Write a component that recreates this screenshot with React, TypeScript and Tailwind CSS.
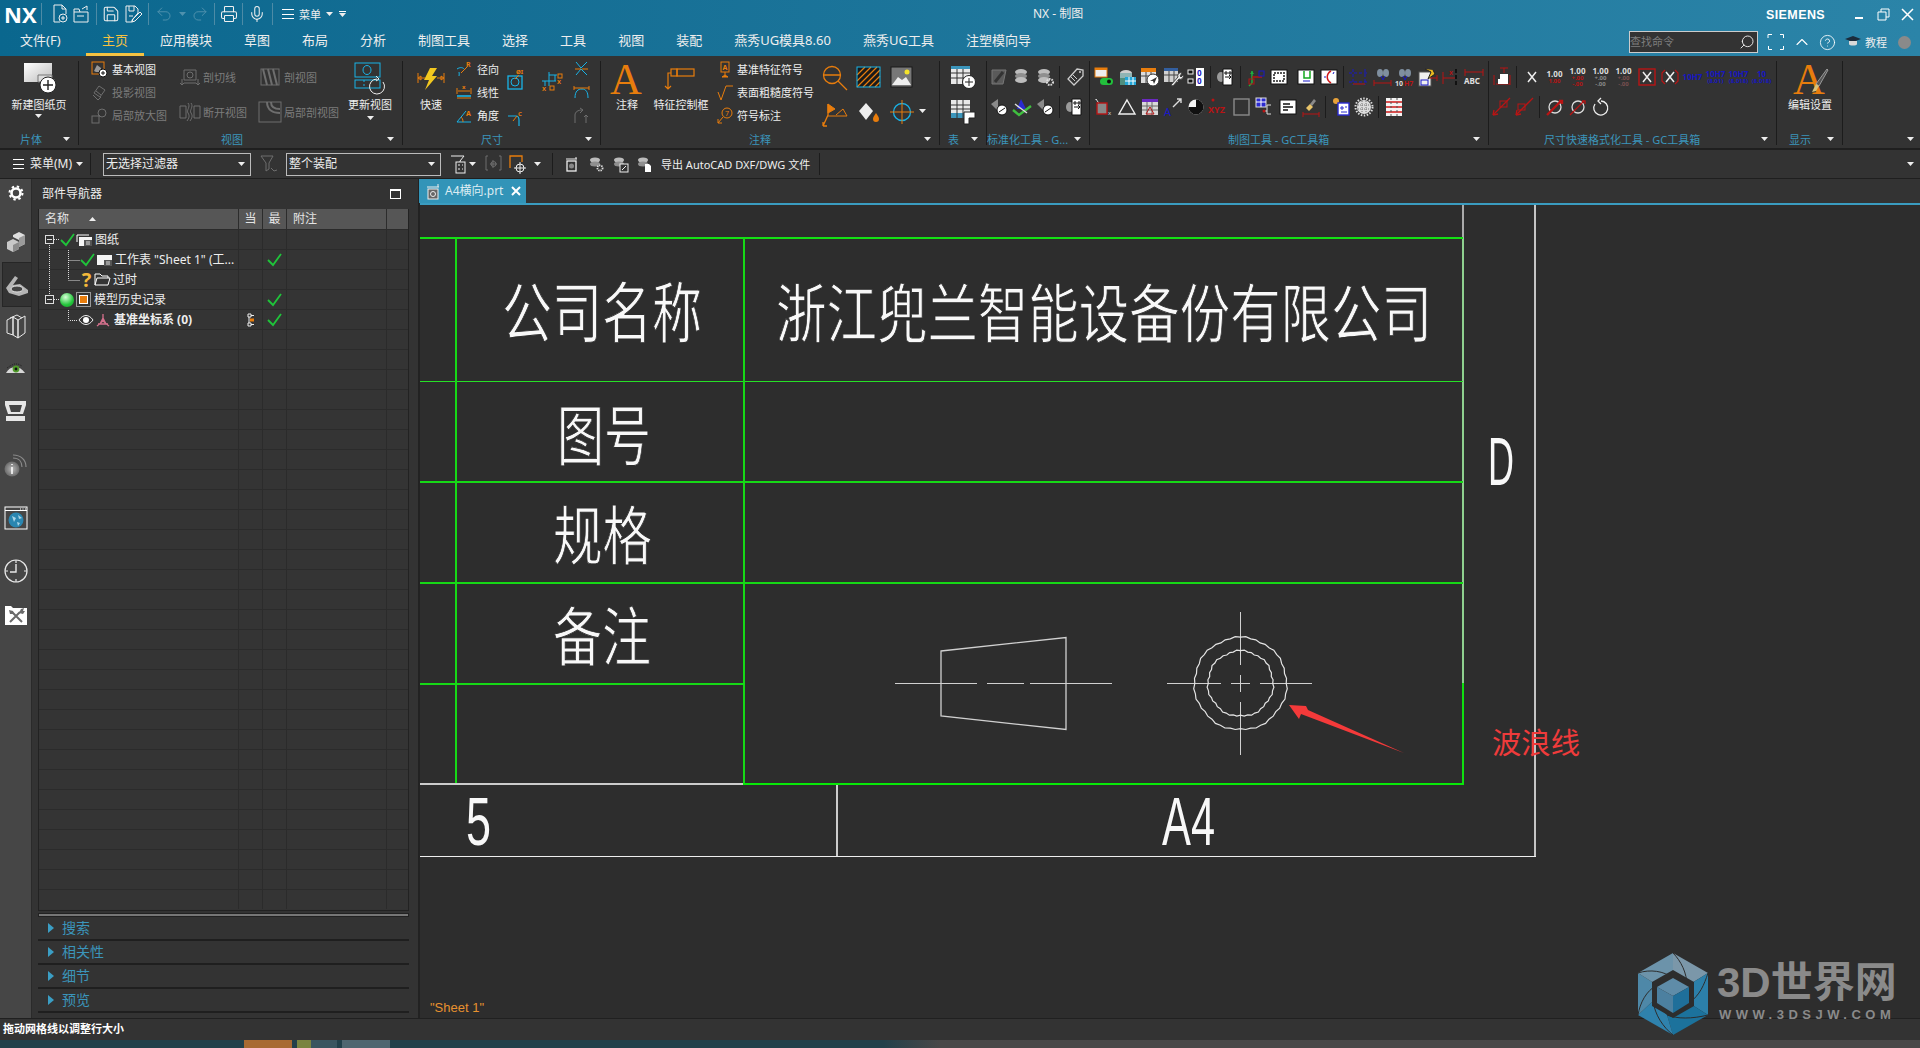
import type { ReactNode } from "react";
import { Save, Printer, Mic, Undo2, Redo2, CircleHelp, ChevronUp, Search } from "lucide-react";

const O = "#e87d0d";
const C = "#19b4e8";
const D = "#6e6e6e";
const W = "#eeeeee";
const R = "#b81414";
const B = "#1818c8";

function Ic({ w = 20, h = 20, children }: { w?: number; h?: number; children: ReactNode }) {
  return (
    <svg width={w} height={h} viewBox={`0 0 ${w} ${h}`} fill="none" className="shrink-0 overflow-visible">
      {children}
    </svg>
  );
}

function Caret({ color = "#eeeeee" }: { color?: string }) {
  return (
    <svg width="7" height="4" viewBox="0 0 7 4" className="shrink-0">
      <path d="M0 0h7L3.5 4z" fill={color} />
    </svg>
  );
}

function Group({ width, labelPad, label, children }: { width: string; labelPad: string; label: string; children: ReactNode }) {
  return (
    <div className={`flex h-[84px] shrink-0 flex-col border-r border-[#1c1c1c] ${width}`}>
      <div className="flex h-[69px]">{children}</div>
      <div className={`flex h-[15px] items-center justify-between pt-[3px] pr-[8px] ${labelPad}`}>
        <span className="text-[11px] leading-[15px] whitespace-nowrap text-[#3b95bb]">{label}</span>
        <Caret />
      </div>
    </div>
  );
}

function BigTool({ width, icon, label }: { width: string; icon: ReactNode; label: string }) {
  return (
    <div className={`flex shrink-0 flex-col items-center pt-px ${width}`}>
      <div className="flex h-[34px] items-center justify-center">{icon}</div>
      <span className="text-[11px] leading-[18px] whitespace-nowrap text-[#eeeeee]">{label}</span>
    </div>
  );
}

function SmallTool({ icon, label, dim }: { icon: ReactNode; label: string; dim?: boolean }) {
  return (
    <div className="flex h-[16px] items-center gap-[4px]">
      {icon}
      <span className={`text-[11px] leading-none whitespace-nowrap ${dim ? "text-[#7c7c7c]" : "text-[#eeeeee]"}`}>{label}</span>
    </div>
  );
}

function WideTool({ icon, label, iconBox }: { icon: ReactNode; label: string; iconBox: string }) {
  return (
    <div className="flex h-[22px] items-center">
      <div className={`flex justify-center ${iconBox}`}>{icon}</div>
      <span className="text-[11px] leading-none whitespace-nowrap text-[#7c7c7c]">{label}</span>
    </div>
  );
}

function Cell({ children }: { children?: ReactNode }) {
  return <div className="flex h-[22px] w-[23px] shrink-0 items-center justify-center">{children}</div>;
}

function Sep() {
  return <div className="mx-[3px] h-[22px] w-px shrink-0 bg-[#1c1c1c]" />;
}

function Tol({ a, b, c, color = "#dddddd", sub = R }: { a: string; b?: string; c?: string; color?: string; sub?: string }) {
  return (
    <div className="flex flex-col items-center font-bold">
      <span className="text-[8px] leading-[8px]" style={{ color }}>{a}</span>
      {b && <span className="text-[6px] leading-[6px]" style={{ color: sub }}>{b}</span>}
      {c && <span className="text-[6px] leading-[6px]" style={{ color: sub }}>{c}</span>}
    </div>
  );
}

/* ---- quick access ---- */
function NewFileIcon() {
  return (
    <Ic w={16} h={20}>
      <path d="M10 1H2v17h6M10 1l4 4v5M10 1v4h4" stroke={W} />
      <circle cx="11" cy="14" r="4" stroke={W} />
      <path d="M11 12v4M9 14h4" stroke={W} />
    </Ic>
  );
}
function OpenFileIcon() {
  return (
    <Ic w={17} h={20}>
      <path d="M1 18V8h14v10zM1 8V5h5l1 3M9 5l5-3v4" stroke={W} />
      <path d="M4 12h7" stroke={W} />
    </Ic>
  );
}
function SaveAsIcon() {
  return (
    <Ic w={17} h={20}>
      <path d="M1 2h9l3 3v4L7 16v2H1z" stroke={W} />
      <path d="M4 2v5h5V2M4 12h4" stroke={W} />
      <path d="M7 18l1-3 7-7 2 2-7 7z" stroke={W} />
    </Ic>
  );
}

/* ---- ribbon icons ---- */
function NewSheetIcon() {
  return (
    <Ic w={34} h={34}>
      <defs>
        <linearGradient id="sheet" x1="0" y1="0" x2="1" y2="1">
          <stop offset="0" stopColor="#ffffff" />
          <stop offset="1" stopColor="#bdbdbd" />
        </linearGradient>
      </defs>
      <rect x="2" y="1" width="28" height="19" fill="url(#sheet)" />
      <path d="M16 13h14v7H16z" fill="#dddddd" stroke="#777777" />
      <circle cx="26" cy="23" r="8" fill="#ffffff" stroke="#222222" />
      <path d="M26 18v10M21 23h10" stroke="#222222" strokeWidth="1.4" />
    </Ic>
  );
}
function BaseViewIcon() {
  return (
    <Ic w={17} h={17}>
      <rect x="1" y="1" width="12" height="12" stroke={O} />
      <path d="M3 10l3-6 4 3v4H5z" fill="#9a9a9a" />
      <circle cx="12" cy="12" r="4" fill="#ffffff" stroke="#111111" />
      <path d="M12 10v4M10 12h4" stroke="#111111" />
    </Ic>
  );
}
function DimProj() {
  return (
    <Ic w={17} h={17}>
      <path d="M3 9l5-7 6 4-5 7zM5 7l5 4M2 11l5 5 3-3" stroke={D} />
    </Ic>
  );
}
function DimDetail() {
  return (
    <Ic w={17} h={17}>
      <rect x="1" y="9" width="7" height="7" stroke={D} />
      <circle cx="11" cy="6" r="4" stroke={D} />
      <path d="M8 9l1-1" stroke={D} />
    </Ic>
  );
}
function DimSection() {
  return (
    <Ic w={22} h={20}>
      <path d="M5 3h12v10H5z" stroke={D} />
      <circle cx="11" cy="8" r="3" stroke={D} />
      <path d="M3 12v6M1 16l2 2 2-2M19 12v6M17 16l2 2 2-2M5 16h12" stroke={D} />
    </Ic>
  );
}
function DimBreak() {
  return (
    <Ic w={22} h={20}>
      <path d="M1 4h6v12H1zM15 4h6v12h-6zM9 1c3 4-2 7 0 10s1 5-1 8M12 1c3 4-2 7 0 10s1 5-1 8" stroke={D} />
    </Ic>
  );
}
function DimCut() {
  return (
    <Ic w={20} h={18}>
      <rect x="1" y="1" width="18" height="16" stroke={D} />
      <path d="M3 1l4 16M8 1l4 16M13 1l4 16" stroke={D} strokeWidth="2" />
    </Ic>
  );
}
function DimLocal() {
  return (
    <Ic w={24} h={22}>
      <rect x="1" y="1" width="22" height="20" stroke={D} />
      <path d="M9 1c0 8 6 11 13 11M13 1c0 5 4 7 9 7" stroke={D} strokeWidth="2" />
    </Ic>
  );
}
function UpdateViewIcon() {
  return (
    <Ic w={32} h={34}>
      <rect x="1" y="1" width="25" height="14" stroke={C} />
      <ellipse cx="13" cy="8" rx="4" ry="4.5" stroke={C} />
      <rect x="1" y="18" width="25" height="8" stroke={C} />
      <path d="M10 18v8" stroke={C} strokeDasharray="2 2" />
      <path d="M29 20a7.5 7.5 0 1 1-6-3" stroke={W} />
      <path d="M22 14l3 3-3 2" stroke={W} />
    </Ic>
  );
}
function QuickIcon() {
  return (
    <Ic w={28} h={26}>
      <path d="M13 2h7l-5 8h5L8 24l4-10H7z" fill="#f2c81f" />
      <path d="M1 7v10M27 7v10M2 12h6M20 12h6M1 12l3-2v4zM27 12l-3-2v4z" stroke={O} />
    </Ic>
  );
}
function RadialIcon() {
  return (
    <Ic w={17} h={17}>
      <path d="M1 8c3-2 6-2 8 1M3 15a9 9 0 0 0 0-4" stroke={C} />
      <path d="M5 12l6-6" stroke={O} />
      <text x="10" y="6" fontSize="7" fontWeight="700" fill={O}>R</text>
    </Ic>
  );
}
function LinearIcon() {
  return (
    <Ic w={17} h={17}>
      <path d="M1 4v6M15 4v6M2 7h12M1 14h14" stroke={O} />
      <path d="M1 12h14" stroke={C} strokeWidth="1.6" />
      <text x="6" y="5" fontSize="6" fontWeight="700" fill={O}>x</text>
    </Ic>
  );
}
function AngleIcon() {
  return (
    <Ic w={17} h={17}>
      <path d="M1 15h14M1 15l9-11" stroke={C} />
      <path d="M7 15c0-3-1-4-2-5" stroke={O} />
      <text x="10" y="9" fontSize="7" fontWeight="700" fill={O}>A</text>
    </Ic>
  );
}
function DiaBoxIcon() {
  return (
    <Ic w={18} h={23}>
      <rect x="1" y="9" width="14" height="13" stroke={C} strokeWidth="1.3" />
      <circle cx="8" cy="15" r="4" stroke={C} />
      <path d="M8 12l4-4" stroke={O} />
      <text x="9" y="7" fontSize="6" fontWeight="700" fill={O}>ØI</text>
    </Ic>
  );
}
function ChamferIcon() {
  return (
    <Ic w={18} h={17}>
      <path d="M1 6h8c2 0 3 2 3 4v6" stroke={C} strokeWidth="1.2" />
      <path d="M6 11l4-5" stroke={O} />
      <text x="11" y="6" fontSize="6" fontWeight="700" fill={O}>C</text>
    </Ic>
  );
}
function OrdinateIcon() {
  return (
    <Ic w={24} h={22}>
      <path d="M1 12h14M8 3v14M8 6h8M4 12v5M14 6v6" stroke={C} />
      <rect x="17" y="5" width="4" height="4" stroke={O} />
      <text x="16" y="15" fontSize="6" fontWeight="700" fill={O}>X</text>
      <text x="1" y="22" fontSize="6" fontWeight="700" fill={O}>X</text>
      <rect x="9" y="17" width="4" height="4" stroke={O} />
    </Ic>
  );
}
function BandIcon() {
  return (
    <Ic w={17} h={16}>
      <path d="M3 1l5 6 6-6M3 14l5-6 6 6" stroke={C} />
      <path d="M2 8h6M9 8h6" stroke={O} />
    </Ic>
  );
}
function ArcIcon() {
  return (
    <Ic w={17} h={16}>
      <path d="M2 14c0-7 3-9 7-9s6 3 6 9" stroke={C} />
      <path d="M1 2v4M16 2v4M1 4h15" stroke={O} />
    </Ic>
  );
}
function DimChainIcon() {
  return (
    <Ic w={17} h={18}>
      <path d="M2 16V8c0-3 3-5 7-5M7 1l3 2-3 3" stroke={D} />
      <path d="M13 8v8M11 10l2-2 2 2" stroke={D} />
    </Ic>
  );
}
function BigA({ brush }: { brush?: boolean }) {
  return (
    <svg width="36" height="33" viewBox="0 0 36 33" className="shrink-0 overflow-visible">
      <text x="1" y="31" fontSize="44" fontFamily="Liberation Serif, serif" fill={O}>A</text>
      {brush && (
        <>
          <path d="M35 6l1 1-9 16-3-2z" fill="#555555" stroke="#999999" />
          <path d="M24 21l3 2-3 5-4 1z" fill="#d8c27a" />
        </>
      )}
    </svg>
  );
}
function FeatFrameIcon() {
  return (
    <Ic w={28} h={24}>
      <rect x="4" y="2" width="6" height="7" stroke={O} strokeWidth="1.2" />
      <rect x="10" y="2" width="17" height="7" stroke={O} strokeWidth="1.2" />
      <path d="M4 6H1v16M-2 19l3 3 3-3" stroke={O} strokeWidth="1.2" />
    </Ic>
  );
}
function DatumIcon() {
  return (
    <Ic w={16} h={17}>
      <rect x="4" y="1" width="8" height="10" stroke={O} />
      <text x="5.5" y="9" fontSize="7" fontWeight="700" fill={O}>A</text>
      <path d="M8 11v3M5 16h6l-3-2z" fill={O} stroke={O} />
    </Ic>
  );
}
function RoughIcon() {
  return (
    <Ic w={16} h={17}>
      <path d="M1 8l3 8 5-14h7" stroke={O} />
    </Ic>
  );
}
function NoteIcon() {
  return (
    <Ic w={16} h={17}>
      <circle cx="10" cy="6" r="5" stroke={O} />
      <text x="8" y="9" fontSize="7" fill={O}>7</text>
      <path d="M6 10l-5 6M1 12v4h4" stroke={O} />
    </Ic>
  );
}
function CenterLensIcon() {
  return (
    <Ic w={26} h={26}>
      <circle cx="10" cy="10" r="8.5" stroke={O} strokeWidth="1.3" />
      <path d="M2 10h16M16 16l9 9" stroke={O} strokeWidth="1.3" />
    </Ic>
  );
}
function FlagIcon() {
  return (
    <Ic w={26} h={26}>
      <path d="M6 2v11l-5 11M1 24h4M1 24v-4" stroke={O} strokeWidth="1.3" />
      <path d="M6 2l7 5-7 4zM14 13l7-6 4 7H6" stroke={O} />
      <path d="M6 2l7 5-7 4z" fill={O} />
    </Ic>
  );
}
function HatchIcon() {
  return (
    <Ic w={25} h={22}>
      <rect x="1" y="1" width="23" height="20" fill="#1a1a1a" />
      <path d="M1 9l8-8M1 15L15 1M1 21L21 1M7 21L24 4M13 21L24 10M19 21l5-5" stroke={O} strokeWidth="1.2" />
      <rect x="1" y="1" width="23" height="20" stroke={C} />
    </Ic>
  );
}
function ImageIcon() {
  return (
    <Ic w={23} h={22}>
      <rect x="1" y="1" width="21" height="20" fill="#777777" stroke="#1a1a1a" />
      <circle cx="17" cy="6" r="2.5" fill="#f4e32a" />
      <path d="M2 19l6-8 4 3 4-3 5 8z" fill="#eeeeee" />
    </Ic>
  );
}
function FillIcon() {
  return (
    <Ic w={25} h={24}>
      <path d="M10 3l7 8-7 9-7-9z" fill="#eeeeee" />
      <path d="M20 13c2 3 3 4 3 6a3 3 0 0 1-6 0c0-2 1-3 3-6z" fill={O} />
    </Ic>
  );
}
function TargetIcon() {
  return (
    <Ic w={24} h={24}>
      <circle cx="12" cy="12" r="8.5" stroke={C} strokeWidth="1.3" />
      <path d="M0 12h24M12 0v24" stroke={O} />
    </Ic>
  );
}
function TableAddIcon() {
  return (
    <Ic w={26} h={24}>
      <rect x="1" y="1" width="19" height="18" fill="#e8e8e8" />
      <rect x="1" y="1" width="19" height="3" fill="#3b95bb" />
      <path d="M1 8h19M1 13h19M7 4v15M13 4v15" stroke="#333333" />
      <circle cx="19" cy="17" r="6.5" fill="#ffffff" stroke="#222222" />
      <path d="M19 13v8M15 17h8" stroke="#222222" />
    </Ic>
  );
}
function TableMergeIcon() {
  return (
    <Ic w={26} h={26}>
      <rect x="1" y="1" width="19" height="18" fill="#e8e8e8" />
      <rect x="1" y="14" width="19" height="5" fill="#3b95bb" />
      <path d="M1 6h19M1 10h19M7 1v18M13 1v18" stroke="#333333" />
      <path d="M14 13h11v6h-6v6h-5z" fill="#ffffff" stroke="#222222" />
    </Ic>
  );
}

function Gear({ x, y, r, color = "#bbbbbb" }: { x: number; y: number; r: number; color?: string }) {
  return <circle cx={x} cy={y} r={r} fill="none" stroke={color} strokeWidth={r * 0.7} strokeDasharray={`${r * 0.5} ${r * 0.35}`} />;
}
function Stack({ badge }: { badge?: ReactNode }) {
  return (
    <Ic w={20} h={20}>
      <ellipse cx="9" cy="5" rx="6" ry="3" fill="#bdbdbd" />
      <ellipse cx="9" cy="9" rx="6" ry="3" fill="#8f8f8f" />
      <ellipse cx="9" cy="13" rx="6" ry="3" fill="#bdbdbd" />
      {badge}
    </Ic>
  );
}
function TagIcon() {
  return (
    <Ic w={20} h={20}>
      <path d="M12 2l6 1 0 6-9 9-6-6z" stroke="#cccccc" strokeWidth="1.3" />
      <path d="M8 8l4 4M6 10l4 4" stroke="#cccccc" />
      <circle cx="15" cy="5" r="1" fill="#cccccc" />
    </Ic>
  );
}
function DocArrow() {
  return (
    <Ic w={20} h={20}>
      <ellipse cx="5" cy="10" rx="4" ry="5" fill="#9a9a9a" />
      <path d="M7 2h9v16H7z" fill="#ffffff" stroke="#111111" />
      <path d="M9 5h2v2H9zM13 5h2v2h-2zM9 10h6l-2-2M15 10l-2 2" stroke="#111111" />
    </Ic>
  );
}
function RingStack() {
  return (
    <Ic w={20} h={20}>
      <path d="M2 7l7-5v12z" fill="#8a8a8a" />
      <circle cx="13" cy="13" r="5" fill="#ffffff" stroke="#111111" />
      <path d="M10 15l6-4" stroke="#111111" />
    </Ic>
  );
}
function CheckBlue() {
  return (
    <Ic w={20} h={20}>
      <path d="M9 2l5 10H5z" fill="#2a2ad0" />
      <path d="M1 13l6 5 12-9" stroke="#3fbf3f" strokeWidth="2.4" />
      <path d="M3 7l12 9" stroke="#dddddd" strokeWidth="1.4" />
    </Ic>
  );
}
function SheetGreen() {
  return (
    <Ic w={20} h={20}>
      <rect x="1" y="1" width="12" height="9" fill="#eeeeee" stroke={O} />
      <rect x="1" y="1" width="12" height="2" fill={O} />
      <rect x="6" y="11" width="13" height="7" rx="3.5" fill="#22c03c" />
      <circle cx="15" cy="14.5" r="2" fill="#111111" />
    </Ic>
  );
}
function DbGrid() {
  return (
    <Ic w={20} h={20}>
      <ellipse cx="9" cy="6" rx="6" ry="3" fill="#cfcfcf" />
      <rect x="3" y="6" width="12" height="5" fill="#8fb4b4" />
      <rect x="8" y="10" width="11" height="8" fill="#22a6d8" />
      <path d="M8 14h11M12 10v8M16 10v8" stroke="#ffffff" />
      <rect x="3" y="11" width="5" height="7" fill="#4f8f7f" />
    </Ic>
  );
}
function TableNav() {
  return (
    <Ic w={20} h={20}>
      <rect x="1" y="1" width="15" height="15" fill="#dddddd" />
      <rect x="1" y="1" width="15" height="4" fill={O} />
      <path d="M1 9h15M6 5v11M11 5v11" stroke="#444444" />
      <circle cx="13" cy="13" r="6" fill="#ffffff" stroke="#333333" />
      <path d="M10 14l7-4-3 7-1-3z" fill="#333333" />
    </Ic>
  );
}
function TableWrench() {
  return (
    <Ic w={20} h={20}>
      <rect x="1" y="1" width="14" height="14" fill="#d0d0d0" />
      <rect x="1" y="1" width="14" height="3" fill="#335f9f" />
      <path d="M1 8h14M6 4v11M11 4v11" stroke="#444444" />
      <path d="M8 18l7-8a3 3 0 0 1 4-4l-2 3 1 1 2-2a3 3 0 0 1-4 4l-6 7z" fill="#eeeeee" stroke="#444444" />
    </Ic>
  );
}
function ZeroZero() {
  return (
    <Ic w={20} h={20}>
      <rect x="10" y="1" width="8" height="18" fill="#ffffff" />
      <text x="11" y="9" fontSize="8" fontWeight="700" fill={B}>0</text>
      <text x="11" y="17" fontSize="8" fontWeight="700" fill={B}>0</text>
      <rect x="2" y="3" width="5" height="4" fill="#111111" stroke="#eeeeee" />
      <rect x="2" y="12" width="5" height="4" fill="#111111" stroke="#eeeeee" />
    </Ic>
  );
}
function Axes() {
  return (
    <Ic w={20} h={20}>
      <path d="M6 4v12M6 16l-3 3" stroke="#1faf3f" strokeWidth="1.5" />
      <path d="M6 10h10" stroke={R} strokeWidth="1.5" />
      <rect x="3" y="12" width="5" height="5" stroke={R} />
      <rect x="13" y="4" width="5" height="5" stroke={B} />
      <path d="M6 4l2 3H4z" fill="#1faf3f" />
    </Ic>
  );
}
function BoxGlyph({ children }: { children: ReactNode }) {
  return (
    <Ic w={18} h={18}>
      <rect x="1" y="2" width="16" height="14" fill="#ffffff" stroke="#111111" />
      {children}
    </Ic>
  );
}
function Binos() {
  return (
    <>
      <ellipse cx="8" cy="6" rx="3" ry="4" fill="#7f8f9f" />
      <ellipse cx="14" cy="6" rx="3" ry="4" fill="#7f8f9f" />
      <path d="M9 9l2 4 2-4" stroke={B} />
    </>
  );
}
function XMark({ color = "#eeeeee" }: { color?: string }) {
  return <path d="M5 5l8 10M13 5L5 15" stroke={color} strokeWidth="1.5" />;
}
function RedDia({ slash }: { slash?: boolean }) {
  return (
    <Ic w={20} h={20}>
      <path d="M1 18L18 1" stroke={R} strokeWidth="1.3" />
      <path d="M1 18l1-5M1 18l5-1" stroke={R} strokeWidth="1.3" />
      <rect x={slash ? 3 : 8} y={slash ? 7 : 4} width="7" height="6" stroke={R} />
    </Ic>
  );
}
function DiaCircle({ heavy }: { heavy?: boolean }) {
  return (
    <Ic w={20} h={20}>
      <circle cx="10" cy="10" r="6" stroke="#dddddd" strokeWidth="1.3" />
      <path d="M2 18L16 4M14 4h3v3" stroke={R} strokeWidth={heavy ? 2.4 : 1.3} />
    </Ic>
  );
}

/* ---- left rail ---- */
function RailGear() {
  return (
    <Ic w={16} h={16}>
      <circle cx="8" cy="8" r="4.500" stroke="#ffffff" strokeWidth="2.600" />
      <circle cx="8" cy="8" r="6.500" stroke="#ffffff" strokeWidth="2" strokeDasharray="2.400 2.700" />
    </Ic>
  );
}
function RailCubes() {
  return (
    <Ic w={20} h={22}>
      <path d="M1 11l6-3 6 3v7l-6 3-6-3z" fill="#c8c8c8" />
      <path d="M7 4l6-3 6 3v9l-6 3V9l-6-3z" fill="#dedede" />
      <path d="M13 7l6-3v9l-6 3z" fill="#9a9a9a" />
      <path d="M7 14v7l6-3v-7z" fill="#8a8a8a" />
    </Ic>
  );
}
function RailDraft() {
  return (
    <Ic w={24} h={22}>
      <path d="M1 14L10 2l3 2-5 7 7-1 8 6v3l-9 3-10-3z" fill="#b5b5b5" />
      <ellipse cx="12" cy="15" rx="6" ry="3" fill="#444444" stroke="#e0e0e0" />
    </Ic>
  );
}
function RailBooks() {
  return (
    <Ic w={20} h={24}>
      <path d="M1 6l6-3v18l-6-2zM7 3l5 3v18l-5-3zM12 6l7-4v17l-7 5z" stroke="#e8e8e8" />
      <path d="M4 4l7-3 5 3" stroke="#e8e8e8" />
    </Ic>
  );
}
function RailEye() {
  return (
    <Ic w={21} h={13}>
      <path d="M1 11C5 3 15 3 20 11z" fill="#d8d8d8" />
      <path d="M2 6l3-2 4-2 4 0 4 2" stroke="#222222" strokeDasharray="1 1" />
      <circle cx="11" cy="7" r="3.4" fill="#4f9a2a" />
      <circle cx="11" cy="7" r="1.4" fill="#111111" />
    </Ic>
  );
}
function RailMonitor() {
  return (
    <Ic w={21} h={21}>
      <path d="M0 0h21v4l-3 9H3L0 4z" fill="#e6e6e6" />
      <path d="M4 4h13l-2 7H6z" fill="#444444" />
      <rect x="1" y="15" width="19" height="5" fill="#e6e6e6" />
    </Ic>
  );
}
function RailInfo() {
  return (
    <Ic w={23} h={23}>
      <defs>
        <radialGradient id="info">
          <stop offset="0" stopColor="#b8b8b8" />
          <stop offset="1" stopColor="#6a6a6a" />
        </radialGradient>
      </defs>
      <circle cx="8" cy="15" r="7.5" fill="url(#info)" />
      <path d="M8 13v7M8 10v1" stroke="#ffffff" strokeWidth="1.5" />
      <path d="M9 4c6 0 9 4 9 9M9 1c8 0 13 5 13 12" stroke="#8a8a8a" strokeWidth="1.2" />
    </Ic>
  );
}
function RailWeb() {
  return (
    <Ic w={24} h={24}>
      <rect x="1" y="1" width="22" height="22" stroke="#ffffff" />
      <path d="M1 4.5h22" stroke="#ffffff" />
      <path d="M16 3h1M18.500 3h1M21 3h1" stroke="#ffffff" />
      <circle cx="12" cy="14" r="7.500" fill="#2a86b0" />
      <path d="M8 10l4 2-2 4zM14 9l4 3-3 1zM13 16l3 1-2 3z" fill="#a8d4e6" />
    </Ic>
  );
}
function RailClock() {
  return (
    <Ic w={24} h={24}>
      <circle cx="12" cy="12" r="11" stroke="#e8e8e8" strokeWidth="1.2" />
      <path d="M12 1v3M12 20v3M1 12h3M20 12h3" stroke="#e8e8e8" strokeWidth="1.2" />
      <path d="M12 5v8H6" stroke="#e8e8e8" strokeWidth="1.4" />
    </Ic>
  );
}
function RailTools() {
  return (
    <Ic w={22} h={21}>
      <path d="M0 2h6l2 2h14v17H0z" fill="#ffffff" />
      <path d="M5 18L15 8M17 18L7 8" stroke="#6a6a6a" strokeWidth="2" />
      <path d="M14 9l2-4 3-1-1 3 2 0-2 3z M4 6l4 1 1 3-4 0z" fill="#6a6a6a" />
    </Ic>
  );
}

/* ---- tree ---- */
function GreenCheck() {
  return (
    <Ic w={15} h={14}>
      <path d="M1 7l5 5 8-11" stroke="#1fc43a" strokeWidth="1.8" />
    </Ic>
  );
}
function Expand() {
  return (
    <div className="flex h-[9px] w-[9px] shrink-0 items-center justify-center border border-[#dddddd] bg-[#333333]">
      <div className="h-px w-[5px] bg-[#dddddd]" />
    </div>
  );
}
function SheetTree({ stacked }: { stacked?: boolean }) {
  return (
    <Ic w={16} h={12}>
      {stacked && <path d="M1 8V1h12" stroke="#ffffff" />}
      <rect x={stacked ? 3 : 1} y={stacked ? 3 : 1} width={stacked ? 13 : 15} height={stacked ? 9 : 10} fill="#f4f4f4" />
      <rect x="8" y="6" width="8" height="6" fill="#555555" />
      <path d="M10 8h4M10 10h4" stroke="#dddddd" />
    </Ic>
  );
}

const treeRows: { pad: string; body: ReactNode; cur?: boolean; latest?: boolean }[] = [
  {
    pad: "pl-[6px]",
    body: (
      <>
        <Expand />
        <div className="ml-[6px]"><GreenCheck /></div>
        <div className="ml-[1px]"><SheetTree stacked /></div>
        <span className="ml-[3px]">图纸</span>
      </>
    ),
  },
  {
    pad: "pl-[41px]",
    latest: true,
    body: (
      <>
        <GreenCheck />
        <div className="ml-[1px]"><SheetTree /></div>
        <span className="ml-[3px] whitespace-nowrap">工作表 "Sheet 1" (工...</span>
      </>
    ),
  },
  {
    pad: "pl-[41px]",
    body: (
      <>
        <span className="w-[13px] text-center text-[20px] leading-none font-bold text-[#f2b93b]">?</span>
        <div className="ml-[1px]">
          <Ic w={16} h={13}>
            <path d="M1 12V1h5l2 2h6v2M1 12l2-7h13l-2 7z" stroke="#ffffff" />
          </Ic>
        </div>
        <span className="ml-[3px]">过时</span>
      </>
    ),
  },
  {
    pad: "pl-[6px]",
    latest: true,
    body: (
      <>
        <Expand />
        <div className="ml-[6px] h-[14px] w-[14px] rounded-full bg-[radial-gradient(circle_at_40%_30%,#d8ffd8,#22c43a_60%,#169a2a)]" />
        <div className="ml-[2px] flex h-[15px] w-[15px] items-center justify-center border border-[#999999]">
          <div className="h-[9px] w-[9px] border border-[#ffffff] bg-[#e87d0d]" />
        </div>
        <span className="ml-[3px]">模型历史记录</span>
      </>
    ),
  },
  {
    pad: "pl-[39px]",
    cur: true,
    latest: true,
    body: (
      <>
        <Ic w={16} h={12}>
          <path d="M1 6c4-6 10-6 14 0-4 6-10 6-14 0z" stroke="#eeeeee" />
          <circle cx="8" cy="6" r="3" fill="#ffffff" />
        </Ic>
        <div className="ml-[1px]">
          <Ic w={16} h={15}>
            <path d="M8 2v7M8 9l-6 5M8 9l6 5M3 12h10M8 6l-3 6M8 6l3 6" stroke="#d4708c" strokeWidth="1.3" />
          </Ic>
        </div>
        <span className="ml-[3px] font-bold whitespace-nowrap">基准坐标系 (0)</span>
      </>
    ),
  },
];

function CurMark() {
  return (
    <Ic w={8} h={14}>
      <path d="M1 1h3v3H1zM4 2.500h3M1 10h3v3H1zM4 11.500h3M2 4v6" stroke="#eeeeee" />
      <rect x="3" y="5.500" width="4" height="3" fill={O} />
    </Ic>
  );
}

function TreeTable() {
  const rows = Array.from({ length: 34 }, (_, i) => treeRows[i]);
  return (
    <div className="relative mr-[9px] ml-[6px] h-[702px] overflow-hidden border-x border-b border-[#222222]">
      <div className="grid h-[20px] grid-cols-[200px_24px_24px_100px_20px] bg-[#565656] text-[12px] text-[#e4e4e4]">
        <div className="flex items-center border-r border-[#2c2c2c] pl-[6px]">
          <span>名称</span>
          <div className="ml-[20px] rotate-180">
            <Caret />
          </div>
        </div>
        <div className="flex items-center justify-center border-r border-[#2c2c2c]">当</div>
        <div className="flex items-center justify-center border-r border-[#2c2c2c]">最</div>
        <div className="flex items-center border-r border-[#2c2c2c] pl-[6px]">附注</div>
        <div />
      </div>
      {rows.map((row, i) => (
        <div key={i} className="grid h-[20px] grid-cols-[200px_24px_24px_100px_20px] border-t border-[#2b2b2b] bg-[#343434] text-[12px] text-[#eeeeee]">
          <div className={`flex items-center overflow-hidden border-r border-[#2b2b2b] ${row ? row.pad : ""}`}>{row?.body}</div>
          <div className="flex items-center justify-center border-r border-[#2b2b2b]">{row?.cur && <CurMark />}</div>
          <div className="flex items-center justify-center border-r border-[#2b2b2b]">{row?.latest && <GreenCheck />}</div>
          <div className="border-r border-[#2b2b2b]" />
          <div />
        </div>
      ))}
      {/* dotted tree connectors */}
      <svg width="60" height="110" className="pointer-events-none absolute top-[20px] left-0" fill="none">
        <path d="M10.500 16V66M15 10.500h6M29.500 21V51M29.500 31.500H41M29.500 51.500H41M15 70.500h6M29.500 81V91.500H39" stroke="#dddddd" strokeDasharray="1 1" />
      </svg>
    </div>
  );
}

function Section({ label }: { label: string }) {
  return (
    <div className="mr-[9px] ml-[6px] flex h-[24px] items-center border-b-2 border-[#1f1f1f] pl-[10px]">
      <svg width="6" height="10" viewBox="0 0 6 10" className="shrink-0">
        <path d="M0 0l6 5-6 5z" fill="#3b9ec4" />
      </svg>
      <span className="ml-[8px] text-[14px] leading-none text-[#3b95bb]">{label}</span>
    </div>
  );
}

/* ---- drawing ---- */
function wavy(cx: number, cy: number, r: number) {
  const pts: string[] = [];
  for (let i = 0; i < 56; i++) {
    const t = (i / 56) * Math.PI * 2;
    const rr = r + (i % 2 ? 0.7 : -0.3) + Math.sin(t * 7) * 0.6;
    pts.push(`${(cx + rr * Math.cos(t)).toFixed(1)},${(cy + rr * Math.sin(t)).toFixed(1)}`);
  }
  return pts.join(" ");
}

const CAD_FONT = "Noto Sans CJK SC, sans-serif";
const NARROW_FONT = "Liberation Sans, sans-serif";

function CadText({ x, y, len, size, font = CAD_FONT, thin = 0.9, children }: { x: number; y: number; len: number; size: number; font?: string; thin?: number; children: string }) {
  // background coloured stroke thins the glyphs, the drawing's font is lighter than Noto
  return (
    <text x={x} y={y} textLength={len} lengthAdjust="spacingAndGlyphs" fontSize={size} fontFamily={font} fill="#f8f8f8" stroke="#2d2d2d" strokeWidth={thin}>
      {children}
    </text>
  );
}

function Drawing() {
  const green = "#16d816";
  const line = "#d0d0d0";
  return (
    <svg width="1500" height="813" viewBox="420 205 1500 813" className="block" fill="none">
      <path d="M1463 205V238" stroke="#aaaaaa" strokeWidth="2" />
      <path d="M1463 238V683" stroke="#8fd08f" strokeWidth="2" />
      <path d="M1463 683V785" stroke="#10e010" strokeWidth="2" />
      <path d="M1535 205V856" stroke="#c4c4c4" strokeWidth="2" />
      <path d="M420 238H1463" stroke="#14e014" strokeWidth="2" />
      <path d="M420 381.500H1463" stroke="#26e026" />
      <path d="M420 482H1463M420 583H1463M420 684H743" stroke={green} strokeWidth="2" />
      <path d="M456 238V784M744 238V784" stroke={green} strokeWidth="2" />
      <path d="M420 784H743" stroke="#cccccc" strokeWidth="2" />
      <path d="M743 784H1464" stroke="#08e808" strokeWidth="2" />
      <path d="M837 785V856" stroke="#cccccc" strokeWidth="2" />
      <path d="M420 856.500H1536" stroke="#eeeeee" />

      <CadText x={502} y={337} len={200} size={66}>公司名称</CadText>
      <CadText x={776} y={337} len={656} size={64}>浙江兜兰智能设备份有限公司</CadText>
      <CadText x={557} y={460} len={94} size={66}>图号</CadText>
      <CadText x={553} y={559} len={99} size={64}>规格</CadText>
      <CadText x={553} y={660} len={98} size={64}>备注</CadText>
      <CadText x={1488} y={485} len={26} size={69} font={NARROW_FONT} thin={0}>D</CadText>
      <CadText x={466} y={845} len={25} size={69} font={NARROW_FONT} thin={0}>5</CadText>
      <CadText x={1162} y={845} len={53} size={69} font={NARROW_FONT} thin={0}>A4</CadText>

      <path d="M941 651L1066 637.500V729.500L941 716Z" stroke={line} strokeWidth="1.300" />
      <path d="M895 683.500H977M987 683.500H1024M1030 683.500H1112" stroke={line} />
      <path d="M1167 683.500H1221M1231 683.500H1250M1260 683.500H1312M1240.500 612V665M1240.500 675V692M1240.500 702V755" stroke={line} />
      <polygon points={wavy(1240.5, 683.5, 46)} stroke="#e4e4e4" strokeWidth="1.200" />
      <polygon points={wavy(1240.5, 683.5, 32.5)} stroke="#e4e4e4" strokeWidth="1.200" />

      <polygon points="1289,705 1306,706 1308,710 1404,753 1301,714 1299,719" fill="#f43a3a" />
      <text x={1492} y={754} textLength={88} lengthAdjust="spacingAndGlyphs" fontSize={29} fontFamily={CAD_FONT} fill="#ef3b3b">波浪线</text>
      <text x={430} y={1012} fontSize={13} fontFamily={NARROW_FONT} fill="#e8912f">"Sheet 1"</text>
    </svg>
  );
}

function Watermark() {
  return (
    <div className="pointer-events-none absolute top-[953px] left-[1637px] flex">
      <svg width="72" height="82" viewBox="0 0 72 82" className="shrink-0">
        <polygon points="36,0 71,20 50,33 36,25" fill="#7b97a9" />
        <polygon points="71,20 71,62 52,50 50,33" fill="#2c80aa" />
        <polygon points="71,62 36,82 30,62 52,50" fill="#1c729c" />
        <polygon points="36,82 1,62 16,48 30,62" fill="#2f82ad" />
        <polygon points="1,62 1,20 20,32 16,48" fill="#4e88a8" />
        <polygon points="1,20 36,0 36,25 20,32" fill="#6c93aa" />
        <path d="M36 0c8 8 14 20 14 33M71 20c-4 12-8 22-19 30M71 62C55 66 40 66 30 62M36 82C26 74 18 62 16 48M1 62c2-12 8-24 19-30M1 20c12-4 26-2 35 5" stroke="#2d2d2d" fill="none" />
        <polygon points="36,17 57,29 57,53 36,65 15,53 15,29" fill="#2d2d2d" />
        <polygon points="36,25 52,34 36,43 20,34" fill="#5f8ca8" />
        <polygon points="20,34 36,43 36,60 20,50" fill="#4c80a0" />
        <polygon points="52,34 36,43 36,60 52,50" fill="#1f6f9a" />
      </svg>
      <div className="ml-[8px] flex flex-col text-[#8a8a8a]">
        <span className="mt-[10px] font-['Liberation_Sans','Noto_Sans_CJK_SC',sans-serif] text-[42px] leading-[40px] font-bold whitespace-nowrap">3D世界网</span>
        <span className="mt-[6px] ml-[2px] font-['Liberation_Sans',sans-serif] text-[13px] leading-[12px] font-bold tracking-[4.500px] whitespace-nowrap">WWW.3DSJW.COM</span>
      </div>
    </div>
  );
}

const TABS = ["主页", "应用模块", "草图", "布局", "分析", "制图工具", "选择", "工具", "视图", "装配", "燕秀UG模具8.60", "燕秀UG工具", "注塑模向导"];

function QuickSep() {
  return <div className="h-[22px] w-px shrink-0 bg-[#4d8ba6]" />;
}

export default function App() {
  return (
    <div className="relative flex h-[1048px] w-[1920px] flex-col overflow-hidden bg-[#333333] font-['Noto_Sans','Noto_Sans_CJK_SC','Liberation_Sans',sans-serif] text-[#eeeeee]">
      {/* title + tabs */}
      <header className="h-[56px] shrink-0 bg-linear-to-r from-[#0a678e] to-[#2b84a8]">
        <div className="flex h-[28px] items-center">
          <div className="flex w-[1033px] shrink-0 items-center">
            <span className="ml-[4px] w-[33px] font-['Open_Sans',sans-serif] text-[22px] leading-[28px] font-bold text-white">NX</span>
            <div className="ml-[4px]"><QuickSep /></div>
            <div className="ml-[10px]"><NewFileIcon /></div>
            <div className="ml-[5px]"><OpenFileIcon /></div>
            <div className="ml-[6px]"><QuickSep /></div>
            <Save size={18} strokeWidth={1.4} className="ml-[5px] text-[#f0f0f0]" />
            <div className="ml-[5px]"><SaveAsIcon /></div>
            <div className="ml-[6px]"><QuickSep /></div>
            <Undo2 size={18} strokeWidth={1.3} className="ml-[6px] text-[#4f91ad]" />
            <div className="ml-[6px]"><Caret color="#4f91ad" /></div>
            <Redo2 size={18} strokeWidth={1.3} className="ml-[5px] text-[#4f91ad]" />
            <div className="ml-[5px]"><QuickSep /></div>
            <Printer size={18} strokeWidth={1.4} className="ml-[5px] text-[#f0f0f0]" />
            <div className="ml-[4px]"><QuickSep /></div>
            <Mic size={18} strokeWidth={1.4} className="ml-[5px] text-[#f0f0f0]" />
            <div className="ml-[6px]"><QuickSep /></div>
            <div className="ml-[9px] flex h-[10px] w-[12px] flex-col justify-between">
              <div className="h-px bg-white" />
              <div className="h-px bg-white" />
              <div className="h-px bg-white" />
            </div>
            <span className="ml-[5px] text-[11px] leading-none">菜单</span>
            <div className="ml-[5px]"><Caret /></div>
            <div className="ml-[6px] flex flex-col gap-px">
              <div className="h-px w-[7px] bg-white" />
              <Caret />
            </div>
          </div>
          <span className="w-[733px] shrink-0 text-[12px] leading-none">NX - 制图</span>
          <span className="mt-[2px] w-[89px] shrink-0 font-['Liberation_Sans',sans-serif] text-[12.500px] leading-none font-bold tracking-[0.4px] text-white">SIEMENS</span>
          <div className="mt-[8px] h-[2px] w-[8px] shrink-0 bg-white" />
          <div className="ml-[14px] shrink-0">
            <Ic w={13} h={13}>
              <path d="M1 4h8v8H1zM4 4V1h8v8H9" stroke="#ffffff" />
            </Ic>
          </div>
          <div className="ml-[11px] shrink-0">
            <Ic w={13} h={13}>
              <path d="M1 1l11 11M12 1L1 12" stroke="#ffffff" strokeWidth="1.5" />
            </Ic>
          </div>
        </div>
        <div className="flex h-[28px]">
          <div className="flex flex-1 text-[13px] leading-[24px] whitespace-nowrap">
            <div className="w-[86px] pl-[20px]">文件(F)</div>
            {TABS.map((t, i) => (
              <div key={t} className={`h-[28px] border-b-[3px] px-[16px] ${i === 0 ? "border-[#f5c242] text-[#f5c242]" : "border-transparent"}`}>
                {t}
              </div>
            ))}
          </div>
          <div className="flex w-[291px] shrink-0 items-center">
            <div className="flex h-[22px] w-[129px] items-center justify-between border border-[#cccccc] bg-[#333333] pr-[2px] text-[11px] text-[#7d7d7d]">
              <span>查找命令</span>
              <Search size={16} strokeWidth={1.4} className="-scale-x-100 text-[#eeeeee]" />
            </div>
            <div className="ml-[10px]">
              <Ic w={16} h={16}>
                <path d="M0 4V.5h4M12 .5h3.500V4M15.500 12v3.500H12M4 15.500H.5V12" stroke="#ffffff" />
              </Ic>
            </div>
            <ChevronUp size={20} strokeWidth={1.3} className="ml-[8px] text-white" />
            <CircleHelp size={17} strokeWidth={1.2} className="ml-[7px] text-white" />
            <div className="ml-[9px]">
              <Ic w={16} h={12}>
                <path d="M0 3l8-3 8 3-8 3z" fill="#1b2b3a" />
                <path d="M4 5v3c0 2 8 2 8 0V5" fill="#d8d8d8" />
              </Ic>
            </div>
            <span className="ml-[4px] text-[11px] leading-none">教程</span>
            <div className="ml-[11px] h-[13px] w-[13px] rounded-full bg-[#8a8a8a]" />
          </div>
        </div>
      </header>

      {/* ribbon */}
      <section className="flex h-[92px] shrink-0 bg-[#333333] pt-[5px]">
        <Group width="w-[79px]" labelPad="pl-[20px]" label="片体">
          <BigTool width="w-[78px]" label="新建图纸页" icon={<NewSheetIcon />} />
          <div className="mt-[53px] -ml-[43px]"><Caret /></div>
        </Group>

        <Group width="w-[324px]" labelPad="pl-[142px]" label="视图">
          <div className="ml-[12px] flex w-[85px] shrink-0 flex-col gap-[7px]">
            <SmallTool icon={<BaseViewIcon />} label="基本视图" />
            <SmallTool dim icon={<DimProj />} label="投影视图" />
            <SmallTool dim icon={<DimDetail />} label="局部放大图" />
          </div>
          <div className="flex w-[80px] shrink-0 flex-col gap-[13px] pt-[5px]">
            <WideTool iconBox="w-[27px]" icon={<DimSection />} label="剖切线" />
            <WideTool iconBox="w-[27px]" icon={<DimBreak />} label="断开视图" />
          </div>
          <div className="flex w-[89px] shrink-0 flex-col gap-[13px] pt-[5px]">
            <WideTool iconBox="w-[28px]" icon={<DimCut />} label="剖视图" />
            <WideTool iconBox="w-[28px]" icon={<DimLocal />} label="局部剖视图" />
          </div>
          <div className="flex w-[50px] shrink-0 flex-col items-center">
            <BigTool width="w-[50px]" label="更新视图" icon={<UpdateViewIcon />} />
            <div className="mt-[2px]"><Caret /></div>
          </div>
        </Group>

        <Group width="w-[198px]" labelPad="pl-[78px]" label="尺寸">
          <div className="ml-[3px]"><BigTool width="w-[50px]" label="快速" icon={<QuickIcon />} /></div>
          <div className="flex w-[51px] shrink-0 flex-col gap-[7px]">
            <SmallTool icon={<RadialIcon />} label="径向" />
            <SmallTool icon={<LinearIcon />} label="线性" />
            <SmallTool icon={<AngleIcon />} label="角度" />
          </div>
          <div className="flex w-[34px] shrink-0 flex-col pt-[6px]">
            <DiaBoxIcon />
            <div className="mt-[20px]"><ChamferIcon /></div>
          </div>
          <div className="w-[32px] shrink-0 pt-[8px]"><OrdinateIcon /></div>
          <div className="flex flex-col gap-[7px]">
            <BandIcon />
            <ArcIcon />
            <DimChainIcon />
          </div>
        </Group>

        <Group width="w-[339px]" labelPad="pl-[148px]" label="注释">
          <BigTool width="w-[52px]" label="注释" icon={<BigA />} />
          <BigTool width="w-[56px]" label="特征控制框" icon={<FeatFrameIcon />} />
          <div className="ml-[8px] flex w-[105px] shrink-0 flex-col gap-[7px]">
            <SmallTool icon={<DatumIcon />} label="基准特征符号" />
            <SmallTool icon={<RoughIcon />} label="表面粗糙度符号" />
            <SmallTool icon={<NoteIcon />} label="符号标注" />
          </div>
          <div className="flex w-[34px] shrink-0 flex-col gap-[11px] pt-[4px]">
            <CenterLensIcon />
            <FlagIcon />
          </div>
          <div className="flex w-[34px] shrink-0 flex-col gap-[11px] pt-[4px]">
            <div className="flex h-[24px] items-center"><HatchIcon /></div>
            <div className="flex h-[24px] items-center"><FillIcon /></div>
          </div>
          <div className="flex w-[29px] shrink-0 flex-col gap-[11px] pt-[4px]">
            <div className="flex h-[24px] items-center"><ImageIcon /></div>
            <div className="flex h-[24px] items-center"><TargetIcon /></div>
          </div>
          <div className="pt-[48px]"><Caret /></div>
        </Group>

        <Group width="w-[47px]" labelPad="pl-[8px]" label="表">
          <div className="flex w-[46px] flex-col items-center gap-[10px] pt-[4px]">
            <TableAddIcon />
            <TableMergeIcon />
          </div>
        </Group>

        <Group width="w-[103px]" labelPad="pl-0" label="标准化工具 - G...">
          <div className="flex flex-col gap-[8px] pt-[5px]">
            <div className="flex items-center">
              <Cell>
                <Ic w={20} h={20}>
                  <path d="M3 3h14l-3 14H3z" fill="#5a5a5a" stroke="#777777" />
                  <path d="M6 15L14 5" stroke="#333333" strokeWidth="3" />
                </Ic>
              </Cell>
              <Cell><Stack /></Cell>
              <Cell><Stack badge={<Gear x={15} y={15} r={3} color="#dddddd" />} /></Cell>
              <Sep />
              <Cell><TagIcon /></Cell>
            </div>
            <div className="flex items-center">
              <Cell><RingStack /></Cell>
              <Cell><CheckBlue /></Cell>
              <Cell><RingStack /></Cell>
              <Sep />
              <Cell><DocArrow /></Cell>
            </div>
          </div>
        </Group>

        <Group width="w-[399px]" labelPad="pl-[138px]" label="制图工具 - GC工具箱">
          <div className="flex flex-col gap-[8px] pt-[5px] pl-[2px]">
            <div className="flex items-center">
              <Cell><SheetGreen /></Cell>
              <Cell><DbGrid /></Cell>
              <Cell><TableNav /></Cell>
              <Cell><TableWrench /></Cell>
              <Cell><ZeroZero /></Cell>
              <Sep />
              <Cell><DocArrow /></Cell>
              <Sep />
              <Cell><Axes /></Cell>
              <Cell>
                <BoxGlyph>
                  <rect x="4" y="5" width="10" height="8" stroke="#555555" strokeDasharray="2 1" strokeWidth="2" />
                </BoxGlyph>
              </Cell>
              <div className="w-[4px] shrink-0" />
              <Cell>
                <BoxGlyph>
                  <path d="M7 3v7h6V3" stroke="#16a81e" strokeWidth="1.5" />
                  <path d="M6 13h7" stroke={B} />
                </BoxGlyph>
              </Cell>
              <Cell>
                <BoxGlyph>
                  <path d="M11 3c-5 3-5 9 0 12" stroke="#d01818" strokeWidth="1.500" />
                  <path d="M6 9h-2M14 4l-1 2" stroke={B} />
                </BoxGlyph>
              </Cell>
              <Sep />
              <Cell>
                <Ic w={20} h={20}>
                  <path d="M0 6h20M0 15h20M4 2v16M16 2v16" stroke={B} strokeDasharray="3 2" />
                  <path d="M4 17h12" stroke={R} />
                </Ic>
              </Cell>
              <Cell>
                <Ic w={20} h={20}>
                  <Binos />
                  <path d="M2 13v6M19 13v6M2 16h17" stroke={R} />
                </Ic>
              </Cell>
              <Cell>
                <Ic w={22} h={20}>
                  <Binos />
                  <text x="1" y="19" fontSize="7" fontWeight="700" fill="#dddddd">10</text>
                  <text x="10" y="19" fontSize="7" fontWeight="700" fill={R}>H7</text>
                </Ic>
              </Cell>
              <Cell>
                <Ic w={20} h={20}>
                  <rect x="1" y="5" width="12" height="14" fill="#f0f0f0" stroke="#555555" />
                  <path d="M7 2l6 3-3 7 7-5-2-4" fill="#e8b820" stroke="#222222" />
                  <rect x="3" y="13" width="7" height="5" stroke={B} />
                  <path d="M12 11h7M19 8v6" stroke={R} />
                </Ic>
              </Cell>
              <Cell>
                <Ic w={20} h={20}>
                  <path d="M2 5v12M2 11h13" stroke={R} />
                  <path d="M15 2v16" stroke="#111111" strokeWidth="2" strokeDasharray="4 2" />
                  <text x="8" y="8" fontSize="6" fontWeight="700" fill={R}>X</text>
                </Ic>
              </Cell>
              <Cell>
                <Ic w={22} h={20}>
                  <path d="M2 2v7M20 2v7M2 5h18" stroke={R} />
                  <text x="1" y="17" fontSize="8" fontWeight="700" fill="#e0e0e0">ABC</text>
                </Ic>
              </Cell>
            </div>
            <div className="flex items-center">
              <Cell>
                <Ic w={20} h={20}>
                  <path d="M2 2l4 6M2 2v1" stroke="#dddddd" />
                  <rect x="3" y="6" width="10" height="11" fill="#888888" stroke={R} strokeWidth="1.4" />
                  <text x="14" y="18" fontSize="6" fill="#dddddd">x</text>
                </Ic>
              </Cell>
              <Cell>
                <Ic w={20} h={20}>
                  <path d="M10 3l8 14H2z" stroke="#f0f0f0" strokeWidth="1.4" />
                </Ic>
              </Cell>
              <Cell>
                <Ic w={20} h={20}>
                  <rect x="2" y="2" width="16" height="16" fill="#d8d8d8" />
                  <rect x="2" y="2" width="16" height="3" fill="#6a2ac0" />
                  <path d="M2 9h16M2 13h16M7 5v13M12 5v13" stroke="#666666" />
                  <path d="M10 10l4 7H6z" stroke={R} />
                </Ic>
              </Cell>
              <Cell>
                <Ic w={20} h={20}>
                  <text x="1" y="19" fontSize="11" fill={B}>A</text>
                  <path d="M10 10l8-8M14 2h4v4" stroke="#dddddd" strokeWidth="1.4" />
                </Ic>
              </Cell>
              <Cell>
                <Ic w={20} h={20}>
                  <circle cx="10" cy="10" r="7.500" fill="#f4f4f4" />
                  <path d="M10 2.500a7.500 7.500 0 0 1 0 15zM10 10H2.500a7.500 7.500 0 0 0 7.500 7.500z" fill="#111111" />
                </Ic>
              </Cell>
              <Cell>
                <Ic w={24} h={20}>
                  <circle cx="6" cy="3" r="1.500" fill={R} />
                  <text x="1" y="16" fontSize="9" fontWeight="700" fill={R}>XYZ</text>
                </Ic>
              </Cell>
              <Cell>
                <Ic w={17} h={20}>
                  <rect x="1" y="2" width="15" height="16" stroke="#8a8a8a" strokeWidth="1.4" />
                </Ic>
              </Cell>
              <Cell>
                <Ic w={20} h={20}>
                  <rect x="1" y="1" width="10" height="9" fill="#2a2ad0" stroke="#dddddd" />
                  <path d="M1 5h10M6 1v9" stroke="#ffffff" />
                  <path d="M16 8h-4v9h4M9 14h3" stroke="#dddddd" />
                  <circle cx="9" cy="14" r="1.500" fill={R} />
                </Ic>
              </Cell>
              <Cell>
                <BoxGlyph>
                  <path d="M4 6h7M4 9h10M4 12h5" stroke="#111111" strokeWidth="1.300" />
                </BoxGlyph>
              </Cell>
              <Cell>
                <Ic w={20} h={20}>
                  <path d="M13 2l2 2-4 5-2-2z" fill="#8a8a8a" />
                  <path d="M5 11l4-4 3 3-4 4z" fill="#e8c46a" />
                  <path d="M2 15v5M18 15v5M2 17h16" stroke={R} />
                </Ic>
              </Cell>
              <Sep />
              <Cell>
                <Ic w={20} h={20}>
                  <circle cx="5" cy="4" r="3" fill="#e8a23a" />
                  <rect x="7" y="6" width="11" height="12" fill="#ffffff" stroke="#2a2ad0" strokeWidth="1.400" />
                  <path d="M10 10h2v2h-2zM14 10h2M10 15h6" stroke="#2a2ad0" />
                </Ic>
              </Cell>
              <Cell>
                <Ic w={20} h={20}>
                  <circle cx="10" cy="10" r="7" fill="#dddddd" />
                  <circle cx="10" cy="10" r="8.500" stroke="#dddddd" strokeWidth="2" strokeDasharray="1.500 1.500" />
                  <path d="M4 8h12M4 12h12M8 4v12M12 4v12" stroke="#777777" strokeDasharray="1 1" />
                </Ic>
              </Cell>
              <Sep />
              <Cell>
                <Ic w={20} h={20}>
                  <rect x="2" y="1" width="16" height="18" fill="#f4f4f4" />
                  <path d="M2 5h16M2 10h16M2 15h16" stroke="#d01818" strokeWidth="1.500" />
                  <path d="M7 1v18M13 1v18" stroke="#555555" strokeDasharray="2 2" />
                </Ic>
              </Cell>
            </div>
          </div>
        </Group>

        <Group width="w-[288px]" labelPad="pl-[55px]" label="尺寸快速格式化工具 - GC工具箱">
          <div className="flex flex-col gap-[8px] pt-[5px] pl-px">
            <div className="flex items-center">
              <Cell>
                <Ic w={20} h={20}>
                  <path d="M8 1h8M12 1v5M2 8v10M18 8v10M4 17h14" stroke={R} />
                  <path d="M8 7h8v10H6v-5h2z" fill="#ffffff" />
                </Ic>
              </Cell>
              <Sep />
              <Cell><Ic w={18} h={20}><XMark /></Ic></Cell>
              <Cell><Tol a="1.00" b="1.00" /></Cell>
              <Cell><Tol a="1.00" b="+.00" c="-.00" /></Cell>
              <Cell><Tol a="1.00" b="+.00" c="-.00" sub="#8a8a8a" /></Cell>
              <Cell><Tol a="1.00" b="+.00" c="-.00" sub="#7a5050" /></Cell>
              <Cell>
                <Ic w={18} h={20}>
                  <rect x="1" y="2" width="16" height="16" stroke={R} strokeWidth="1.400" />
                  <XMark />
                </Ic>
              </Cell>
              <Cell>
                <Ic w={18} h={20}>
                  <path d="M4 3L1 6v8l3 3M14 3l3 3v8l-3 3" stroke={R} strokeWidth="1.200" />
                  <XMark />
                </Ic>
              </Cell>
              <Cell><span className="text-[8px] leading-none font-bold text-[#1616c0]">10H7</span></Cell>
              <Cell><Tol a="10H7" b="(8.01)" color="#1616c0" sub="#1616c0" /></Cell>
              <Cell><Tol a="10H7" b="(8.018)" color="#1616c0" sub="#1616c0" /></Cell>
              <Cell><Tol a="10" b="(8.018)" color="#1616c0" sub="#1616c0" /></Cell>
            </div>
            <div className="flex items-center">
              <Cell><RedDia /></Cell>
              <Cell><RedDia slash /></Cell>
              <Sep />
              <Cell><DiaCircle heavy /></Cell>
              <Cell><DiaCircle /></Cell>
              <Cell>
                <Ic w={18} h={20}>
                  <path d="M9 4a7 7 0 1 1-6 3M9 1L6 4l3 3" stroke="#eeeeee" strokeWidth="1.300" />
                </Ic>
              </Cell>
            </div>
          </div>
        </Group>

        <Group width="w-[66px]" labelPad="pl-[12px]" label="显示">
          <BigTool width="w-[66px]" label="编辑设置" icon={<BigA brush />} />
        </Group>

        <div className="flex flex-1 items-end justify-end pr-[6px] pb-[7px]">
          <Caret />
        </div>
      </section>

      {/* toolbar */}
      <section className="flex h-[30px] shrink-0 items-center border-t-2 border-[#1f1f1f] bg-[#333333] text-[12px]">
        <div className="ml-[13px] flex h-[10px] w-[11px] shrink-0 flex-col justify-between">
          <div className="h-px bg-white" />
          <div className="h-px bg-white" />
          <div className="h-px bg-white" />
        </div>
        <span className="ml-[6px] w-[40px] shrink-0 leading-none whitespace-nowrap">菜单(M)</span>
        <div className="ml-[6px]"><Caret /></div>
        <div className="ml-[7px] h-[22px] w-px shrink-0 bg-[#1c1c1c]" />
        <div className="ml-[12px] flex h-[23px] w-[148px] shrink-0 items-center justify-between border border-[#bbbbbb] pr-[5px] pl-[2px]">
          <span className="leading-none">无选择过滤器</span>
          <Caret />
        </div>
        <div className="ml-[9px] shrink-0">
          <Ic w={18} h={20}>
            <path d="M1 2h12l-4 7v6l-3 2V9zM11 14l3 3 3-1" stroke={D} />
          </Ic>
        </div>
        <div className="ml-[8px] flex h-[23px] w-[155px] shrink-0 items-center justify-between border border-[#bbbbbb] pr-[5px] pl-[2px]">
          <span className="leading-none">整个装配</span>
          <Caret />
        </div>
        <div className="ml-[9px] shrink-0">
          <Ic w={16} h={20}>
            <path d="M1 2h13l-4 5v4" stroke={W} />
            <rect x="6" y="8" width="9" height="11" fill="#333333" stroke={W} />
            <path d="M8 11h2M12 11h1M8 15h2M12 15h1" stroke={W} />
          </Ic>
        </div>
        <div className="ml-[3px]"><Caret /></div>
        <div className="ml-[9px] shrink-0">
          <Ic w={17} h={20}>
            <path d="M3 2H1v14h2M14 2h2v14h-2M8 6v8M5 10h7" stroke={D} />
            <circle cx="8.500" cy="10" r="2.500" stroke={D} />
          </Ic>
        </div>
        <div className="ml-[7px] shrink-0">
          <Ic w={18} h={21}>
            <path d="M1 14V2h12v6" stroke={O} strokeWidth="1.300" />
            <circle cx="11" cy="14" r="4" stroke={W} />
            <path d="M11 8v12M5 14h12" stroke={W} />
          </Ic>
        </div>
        <div className="ml-[7px]"><Caret /></div>
        <div className="ml-[11px] h-[22px] w-px shrink-0 bg-[#1c1c1c]" />
        <div className="ml-[12px] shrink-0">
          <Ic w={14} h={18}>
            <path d="M11 2v2M1 4h11" stroke={W} />
            <rect x="2" y="6" width="9" height="10" stroke={W} strokeWidth="1.300" />
            <circle cx="6.500" cy="11" r="2.500" fill="#888888" />
          </Ic>
        </div>
        <div className="ml-[10px] shrink-0">
          <Ic w={16} h={18}>
            <ellipse cx="6" cy="5" rx="5" ry="2.500" fill="#bbbbbb" />
            <ellipse cx="6" cy="9" rx="5" ry="2.500" fill="#8f8f8f" />
            <Gear x={11} y={13} r={2.600} color="#dddddd" />
          </Ic>
        </div>
        <div className="ml-[8px] shrink-0">
          <Ic w={16} h={18}>
            <ellipse cx="6" cy="5" rx="5" ry="2.500" fill="#bbbbbb" />
            <ellipse cx="6" cy="9" rx="5" ry="2.500" fill="#8f8f8f" />
            <rect x="7" y="9" width="8" height="8" fill="#333333" stroke={W} />
            <path d="M9 15l4-4" stroke={W} />
          </Ic>
        </div>
        <div className="ml-[8px] shrink-0">
          <Ic w={16} h={18}>
            <ellipse cx="6" cy="5" rx="5" ry="2.500" fill="#bbbbbb" />
            <ellipse cx="6" cy="9" rx="5" ry="2.500" fill="#8f8f8f" />
            <path d="M8 9h4l2 2v6H8z" fill="#ffffff" />
          </Ic>
        </div>
        <span className="ml-[8px] text-[11px] leading-none whitespace-nowrap">导出 AutoCAD DXF/DWG 文件</span>
        <div className="ml-[9px] h-[22px] w-px shrink-0 bg-[#1c1c1c]" />
        <div className="ml-auto pr-[6px]"><Caret /></div>
      </section>

      {/* main */}
      <main className="flex h-[840px] shrink-0 border-t border-[#1f1f1f]">
        <aside className="flex w-[32px] shrink-0 flex-col items-end border-r border-[#2a2a2a] bg-[#464646]">
          <div className="flex h-[28px] w-full items-center justify-center"><RailGear /></div>
          <div className="mt-[15px] flex h-[40px] w-full items-center justify-center"><RailCubes /></div>
          <div className="flex h-[45px] w-[29px] items-center justify-center border-y border-l border-[#262626] bg-[#333333]"><RailDraft /></div>
          <div className="flex h-[38px] w-full items-center justify-center"><RailBooks /></div>
          <div className="flex h-[46px] w-full items-center justify-center"><RailEye /></div>
          <div className="flex h-[40px] w-full items-center justify-center"><RailMonitor /></div>
          <div className="mt-[14px] flex h-[40px] w-full items-center justify-center"><RailInfo /></div>
          <div className="mt-[13px] flex h-[40px] w-full items-center justify-center"><RailWeb /></div>
          <div className="mt-[13px] flex h-[40px] w-full items-center justify-center"><RailClock /></div>
          <div className="mt-[3px] flex h-[40px] w-full items-center justify-center"><RailTools /></div>
        </aside>

        <div className="flex w-[386px] shrink-0 flex-col bg-[#333333]">
          <div className="flex h-[30px] items-center justify-between pr-[17px] pl-[10px] text-[12px]">
            <span>部件导航器</span>
            <div className="h-[10px] w-[11px] border border-t-2 border-white" />
          </div>
          <TreeTable />
          <div className="mt-[2px] mr-[9px] ml-[6px] h-[4px] border border-[#222222] bg-[#777777]" />
          <Section label="搜索" />
          <Section label="相关性" />
          <Section label="细节" />
          <Section label="预览" />
        </div>

        <div className="flex flex-1 flex-col border-l-2 border-[#222222] bg-[#2d2d2d]">
          <div className="flex h-[24px] shrink-0 bg-[#333333]">
            <div className="-ml-px flex w-[107px] items-center bg-[#3294b8] pl-[7px] text-[12px] leading-none">
              <Ic w={14} h={17}>
                <path d="M12 1v3M1 4h12" stroke="#eeeeee" />
                <rect x="2" y="6" width="10" height="10" fill="#666666" stroke="#eeeeee" />
                <circle cx="7" cy="11" r="2.500" stroke="#eeeeee" />
              </Ic>
              <span className="ml-[5px] w-[66px] whitespace-nowrap text-[#dcecf2]">A4横向.prt</span>
              <Ic w={10} h={10}>
                <path d="M1 1l8 8M9 1L1 9" stroke="#ffffff" strokeWidth="2" />
              </Ic>
            </div>
          </div>
          <div className="h-[2px] shrink-0 bg-[#3a9cc0]" />
          <Drawing />
        </div>
      </main>

      {/* status */}
      <footer className="flex h-[22px] shrink-0 items-center border-t border-[#202020] bg-[#333333] pl-[3px] text-[11px] font-bold text-white">
        拖动网格线以调整行大小
      </footer>
      <div className="relative h-[8px] shrink-0 bg-linear-to-r from-[#22404a] from-[46%] to-[#484848] to-[49%]">
        <div className="flex h-full pl-[244px]">
          <div className="w-[48px] bg-[#a86a32]" />
          <div className="ml-[5px] w-[14px] bg-[#7a8440]" />
          <div className="w-[26px] bg-[#3a5560]" />
          <div className="ml-[5px] w-[48px] bg-[#4f6670]" />
        </div>
      </div>

      <Watermark />
    </div>
  );
}
